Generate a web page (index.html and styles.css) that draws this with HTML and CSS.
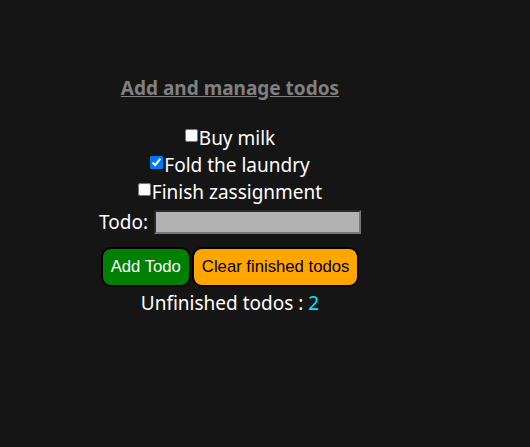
FILE: index.html
```html
<!DOCTYPE html>
<html>
<head>
<meta charset="utf-8">
<link rel="stylesheet" href="styles.css">
</head>
<body>
<div class="app">
  <h3 class="title">Add and manage todos</h3>
  <ul class="list">
    <li><input type="checkbox">Buy milk</li>
    <li><input type="checkbox" checked>Fold the laundry</li>
    <li><input type="checkbox">Finish zassignment</li>
  </ul>
  <div class="field">
    <label>Todo:</label>
    <input class="todo-input" type="text">
  </div>
  <div class="actions">
    <button class="btn btn-add">Add Todo</button>
    <button class="btn btn-clear">Clear finished todos</button>
  </div>
  <p class="count">Unfinished todos : <span class="num">2</span></p>
</div>
</body>
</html>
```
FILE: styles.css
```css
html, body {
  margin: 0;
  background: #151515;
}
body {
  padding: 8px;
  color: #ffffff;
  font-family: "Noto Sans", "Open Sans", sans-serif;
  font-size: 19px;
}
.app {
  width: 444px;
  text-align: center;
}
.title {
  margin: 67px 0 24px;
  font-size: 19px;
  font-weight: bold;
  color: #808080;
  text-decoration: underline;
}
.list {
  list-style: none;
  margin: 0;
  padding: 0;
}
.list li {
  line-height: 27px;
}
.list input {
  margin: 0 1px 0 0;
  width: 13px;
  height: 13px;
  vertical-align: 3px;
}
.field {
  margin-top: 3px;
  display: flex;
  justify-content: center;
  align-items: center;
  gap: 6px;
}
.todo-input {
  box-sizing: border-box;
  width: 207px;
  height: 24px;
  padding: 0;
  background: #b3b3b3;
  border: 2px solid #767676;
  border-top-color: #2a2a2a;
  border-left-color: #2a2a2a;
}
.actions {
  margin-top: 12px;
  display: flex;
  justify-content: center;
  gap: 1px;
}
.btn {
  height: 40px;
  padding: 0 8px;
  border: 2px solid #000;
  border-radius: 10px;
  font-family: "Liberation Sans", Arial, sans-serif;
  font-size: 16.7px;
}
.btn-add {
  background: #008000;
  color: #fff;
}
.btn-clear {
  background: #ffa500;
  color: #000;
}
.count {
  margin: 3px 0 0;
}
.num {
  color: #00e5ff;
}
```
